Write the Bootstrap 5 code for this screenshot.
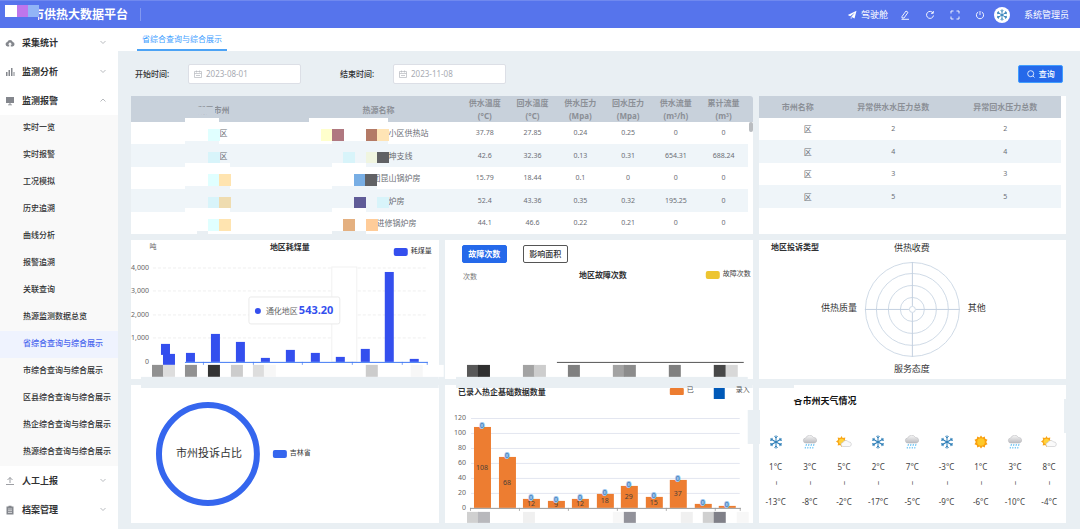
<!DOCTYPE html>
<html lang="zh-CN">
<head>
<meta charset="utf-8">
<meta name="viewport" content="width=device-width, initial-scale=1">
<title>供热大数据平台</title>
<link href="https://cdn.jsdelivr.net/npm/bootstrap@5.3.0/dist/css/bootstrap.min.css" rel="stylesheet">
<style>
:root{--page:#e9eff3;--brand:#5674ec;--primary:#2569ea}
body{font-family:"Noto Sans","Noto Sans CJK SC",sans-serif;font-size:8px;line-height:12px;color:#303133;background:var(--page)}
svg{display:block}
.topbar{height:28px;background:var(--brand);border-top:1px solid #7089ef;color:#fff;padding:0 11px 0 32px;font-size:9px}
.brand-name{font-size:12px;line-height:20px;font-weight:700}
.brand-mask{left:5px;top:4px}
.brand-rule{width:1px;height:13px;background:#8298f0;margin-left:12px}
.tools{margin-left:-4px}
.tool-btn{border:0;background:none;padding:0;color:#fff;width:10px;height:10px;margin-right:15px}
.avatar{margin:0 14px 0 -6px}
.side{width:118px;background:#fff}
.group-btn{height:29px;width:100%;border:0;background:none;padding:0 11px 0 5px;font-size:9px;font-weight:700;color:#303133}
.group-btn .label-text{margin-left:7px}
.sub-list{background:#f9f9f9}
.sub-list a{height:27px;padding:0 0 3px 23px;display:flex;align-items:center;color:#303133;text-decoration:none;font-weight:500;white-space:nowrap}
.sub-list a.active{background:#eff3fe;color:#4a66ee}
.main-col{min-width:0}
.tabs{background:#fff;height:23px;padding-left:19px}
.tabs a{color:#409eff;text-decoration:none;padding:0 5px;border-bottom:2px solid #4da3f5;line-height:22px;height:23px}
.filters{height:45px;padding:0 17px}
.filters label{font-weight:500;width:53px}
.date-box{width:113px;height:20px;border:1px solid #dcdfe6;border-radius:2px;background:#fff;padding:0 5px;margin-right:39px}
.date-box input{border:0;outline:0;background:none;padding:0;width:80px;color:#a8abb2;line-height:12px}
.search-btn{width:45px;height:18px;border-radius:2px;padding:0;font-size:8px;line-height:12px;font-weight:500;background:var(--primary);border-color:#409eff}
.board{padding:0 14px 6px 13px;display:grid;grid-template-columns:repeat(3,minmax(0,1fr));grid-auto-rows:1fr;gap:6px}
.panel{background:#fff;position:relative;min-width:0}
.panel svg text,.weather{font-family:"Noto Sans","Noto Sans CJK SC",sans-serif}
.panel-wide{grid-column:span 2;padding-right:5px;background:linear-gradient(#c8d1db 26px,#fff 26px);border-radius:3px 3px 0 0}
.panel-side{padding-right:5px}
.grid-table{width:100%;table-layout:fixed;border-collapse:collapse;text-align:center;color:#6b6e75;font-size:7px}
.grid-table th{background:#c8d1db;color:#8b8f96;font-size:8px;font-weight:700;padding:0;height:22px}
.grid-table.tall th{height:26px;line-height:13px}
.grid-table sup{font-size:5px;line-height:0}
.grid-table td{padding:0;height:22px;line-height:12px;white-space:nowrap;overflow:hidden}
.grid-table tbody tr:nth-child(even) td{height:23px;background:#eff5f9}
.grid-table td.cjk{font-size:8px}
.hid-3{padding-left:20px}.hid-5{padding-left:36px}.hid-6{padding-left:44px}.hid-8{padding-left:60px}
.overlay{position:absolute;left:0;top:0;overflow:visible;pointer-events:none}
.thumb{position:absolute;right:0;top:26px;width:4px;height:10px;border-radius:2px;background:#b9bcc0}
.chart{width:100%;height:auto;overflow:visible}
.mode-row{height:23px;padding:5px 17px 0}
.mode-btn{height:18px;width:45px;padding:0;border-radius:2px;font-size:8px;line-height:12px;font-weight:700;background:var(--primary);border-color:var(--primary)}
.mode-btn.plain{background:#fff;color:#303133;border-color:#555;font-weight:500}
.weather-title{font-size:9px;line-height:14px;font-weight:700;color:#111;padding:9px 0 0 35px;margin:0}
.weather{display:grid;grid-template-columns:repeat(9,1fr);text-align:center;padding-top:27px;color:#444}
.weather svg{width:16px;height:14px;margin:0 auto 12px}
.tilde{writing-mode:vertical-rl;height:6px;font-size:7px;line-height:8px;margin:7px auto 10px;width:8px;color:#222}
</style>
</head>
<body class="d-flex flex-column min-vh-100">
<svg width="0" height="0" class="position-absolute" aria-hidden="true">
<defs>
<linearGradient id="cl" x1="0" y1="0" x2="0" y2="1"><stop offset="0" stop-color="#f7f7f7"/><stop offset="1" stop-color="#bcbcc0"/></linearGradient>
<symbol id="snow" viewBox="0 0 16 14"><g stroke="#2f7fb8" stroke-width="1" fill="none"><g id="arm"><path d="M8 7V.4M6.400 1.300 8 2.900l1.600-1.600"/></g><use href="#arm" transform="rotate(60 8 7)"/><use href="#arm" transform="rotate(120 8 7)"/><use href="#arm" transform="rotate(180 8 7)"/><use href="#arm" transform="rotate(240 8 7)"/><use href="#arm" transform="rotate(300 8 7)"/></g></symbol>
<symbol id="rain" viewBox="0 0 16 14"><path d="M4 8a2.500 2.500 0 0 1-.3-5A4.300 4.300 0 0 1 11.500 2.500 2.800 2.800 0 0 1 12.500 8z" fill="url(#cl)" stroke="#b5b5b8" stroke-width=".5"/><path d="M4.500 9 4 10.800M7 9l-.5 1.800M9.500 9 9 10.800M12 9l-.5 1.800M3.500 12l-.4 1.500M6 12l-.4 1.500M8.500 12l-.4 1.500M11 12l-.4 1.500" stroke="#6cc4f4" stroke-width="1.100"/></symbol>
<symbol id="part" viewBox="0 0 16 14"><g transform="translate(5.500 6.500)"><path d="M0-5.500 1.200-3.600 3.800-4 3.400-1.500 5.500 0 3.400 1.500 3.800 4 1.200 3.600 0 5.500-1.200 3.600-3.800 4-3.400 1.500-5.500 0-3.400-1.500-3.800-4-1.200-3.600z" fill="#f9a516"/><circle r="2.800" fill="#ffd23c"/></g><path d="M7 11.500a2 2 0 0 1 0-4 3 3 0 0 1 5.500-.5 2.300 2.300 0 0 1 1 4.500z" fill="#fafafa" stroke="#c4c4c8" stroke-width=".6"/></symbol>
<symbol id="sunny" viewBox="0 0 16 14"><g transform="translate(8 7)"><path d="M0-6.500 1.500-4.600 3.800-5.500 4.200-3.200 6.500-2.200 5.200 0 6.500 2.200 4.200 3.200 3.800 5.500 1.500 4.600 0 6.500-1.500 4.600-3.800 5.500-4.200 3.200-6.500 2.200-5.200 0-6.500-2.200-4.200-3.200-3.800-5.500-1.500-4.600z" fill="#f9a010"/><circle r="3.800" fill="#ffc928"/></g></symbol>
<symbol id="down" viewBox="0 0 8 8"><path d="M1.500 2 4 4.500 6.500 2" fill="none" stroke="#a6a9af" stroke-width=".8"/></symbol>
<symbol id="up" viewBox="0 0 8 8"><path d="M1.500 4.500 4 2l2.500 2.500" fill="none" stroke="#a6a9af" stroke-width=".8"/></symbol>
<symbol id="cal" viewBox="0 0 8 8"><path d="M.5 1.500h7v6h-7zM.5 3.500h7M2.500.5v2M5.500.5v2M2 5.500h4" fill="none" stroke="#b4b7bd" stroke-width=".7"/></symbol>
</defs></svg>

<header class="topbar d-flex align-items-center position-relative">
  <span class="brand-name">市供热大数据平台</span>
  <svg class="brand-mask position-absolute" width="34" height="18" aria-hidden="true"><path d="M24 12h9v6h-9z" fill="#5674ec"/><path d="M0 0h12v12H0z" fill="#fff"/><path d="M12 0h11v12H12z" fill="#be76ec"/><path d="M23 0h11v12H23z" fill="#92b4f6"/></svg>
  <span class="brand-rule"></span>
  <a href="#" class="ms-auto me-3 d-flex align-items-center text-white text-decoration-none">
    <svg class="me-1" width="10" height="10" viewBox="0 0 10 10"><path d="M9.500.8.8 5l2.400 1.200L8 2.500 4.300 6.700 7.500 8.400zM3.800 7v2.200L5 7.700z" fill="#fff"/></svg>驾驶舱</a>
  <div class="tools d-flex align-items-center">
  <button class="tool-btn" aria-label="编辑"><svg width="10" height="10" viewBox="0 0 10 10" fill="none" stroke="#fff" stroke-width=".9"><path d="M2 6.500 6 1l2 1.400L4 8H2zM1.500 9.300h7.500"/></svg></button>
  <button class="tool-btn" aria-label="刷新"><svg width="10" height="10" viewBox="0 0 10 10" fill="none" stroke="#fff" stroke-width=".9"><path d="M8 3A3.500 3.500 0 1 0 8.500 5.500M8.300 1v2.300H6"/></svg></button>
  <button class="tool-btn" aria-label="全屏"><svg width="10" height="10" viewBox="0 0 10 10" fill="none" stroke="#fff" stroke-width=".9"><path d="M1 3.500V1h2.500M6.500 1H9v2.500M9 6.500V9H6.500M3.500 9H1V6.500"/></svg></button>
  <button class="tool-btn" aria-label="退出"><svg width="10" height="10" viewBox="0 0 10 10" fill="none" stroke="#fff" stroke-width=".9"><path d="M3.200 2A3.600 3.600 0 1 0 6.800 2M5 1v4"/></svg></button>
  </div>
  <svg class="avatar" width="16" height="16" viewBox="0 0 16 16"><circle cx="8" cy="8" r="8" fill="#fff"/><use href="#snow" x="1" y="2" width="14" height="12"/></svg>
  <span>系统管理员</span>
</header>

<div class="d-flex flex-grow-1">
<nav class="side flex-shrink-0">
  <button class="group-btn d-flex align-items-center"><svg width="10" height="10" viewBox="0 0 10 10"><path d="M2.500 8.500a2.300 2.300 0 0 1-.2-4.500 2.900 2.900 0 0 1 5.500 0 2.300 2.300 0 0 1-.2 4.500H5.800V6.500h1.300L5 4.300 2.900 6.500h1.300v2z" fill="#84878d"/></svg><span class="label-text me-auto">采集统计</span><svg width="8" height="8"><use href="#down"/></svg></button>
  <button class="group-btn d-flex align-items-center"><svg width="10" height="10" viewBox="0 0 10 10"><path d="M1 5h1.500v4H1zM3.500 3H5v6H3.500zM6 1h1.500v8H6zM8.500 5h1v4h-1z" fill="#84878d"/></svg><span class="label-text me-auto">监测分析</span><svg width="8" height="8"><use href="#down"/></svg></button>
  <button class="group-btn d-flex align-items-center"><svg width="10" height="10" viewBox="0 0 10 10"><path d="M1 1h8v6H1zM4.500 7h1v1.500h1.500v.7H3v-.7h1.500z" fill="#84878d"/></svg><span class="label-text me-auto">监测报警</span><svg width="8" height="8"><use href="#up"/></svg></button>
  <div class="sub-list">
    <a href="#">实时一览</a><a href="#">实时报警</a><a href="#">工况模拟</a><a href="#">历史追溯</a><a href="#">曲线分析</a><a href="#">报警追溯</a><a href="#">关联查询</a><a href="#">热源监测数据总览</a><a href="#" class="active">省综合查询与综合展示</a><a href="#">市综合查询与综合展示</a><a href="#">区县综合查询与综合展示</a><a href="#">热企综合查询与综合展示</a><a href="#">热源综合查询与综合展示</a>
  </div>
  <button class="group-btn d-flex align-items-center"><svg width="10" height="10" viewBox="0 0 10 10" fill="none" stroke="#84878d" stroke-width=".8"><path d="M1 8.500h8M5 7V1.500M2.500 4 5 1.500 7.500 4"/></svg><span class="label-text me-auto">人工上报</span><svg width="8" height="8"><use href="#down"/></svg></button>
  <button class="group-btn d-flex align-items-center"><svg width="10" height="10" viewBox="0 0 10 10"><path d="M1.500 1.500h2V.8h3v.7h2v8h-7z" fill="#84878d"/><path d="M3 4h4M3 5.700h4M3 7.500h4" stroke="#fff" stroke-width=".6"/></svg><span class="label-text me-auto">档案管理</span><svg width="8" height="8"><use href="#down"/></svg></button>
</nav>

<main class="main-col flex-grow-1 d-flex flex-column">
  <div class="tabs d-flex"><a href="#">省综合查询与综合展示</a></div>
  <form class="filters d-flex align-items-center" onsubmit="return false">
    <label for="d1">开始时间:</label>
    <div class="date-box d-flex align-items-center gap-1"><svg width="8" height="8" class="flex-shrink-0"><use href="#cal"/></svg><input id="d1" type="text" value="2023-08-01"></div>
    <label for="d2">结束时间:</label>
    <div class="date-box d-flex align-items-center gap-1"><svg width="8" height="8" class="flex-shrink-0"><use href="#cal"/></svg><input id="d2" type="text" value="2023-11-08"></div>
    <button class="btn btn-primary search-btn ms-auto d-flex align-items-center justify-content-center gap-1"><svg width="8" height="8" viewBox="0 0 8 8" fill="none" stroke="#fff" stroke-width=".8"><circle cx="3.700" cy="3.700" r="3"/><path d="m6 6 1.500 1.500"/></svg>查询</button>
  </form>

  <div class="board flex-grow-1">
    <section class="panel panel-wide">
      <table class="grid-table tall">
        <colgroup><col><col><col style="width:7.75%"><col style="width:7.75%"><col style="width:7.75%"><col style="width:7.75%"><col style="width:7.75%"><col style="width:7.75%"></colgroup>
        <thead><tr><th>所属市州</th><th>热源名称</th><th>供水温度<br>(°C)</th><th>回水温度<br>(°C)</th><th>供水压力<br>(Mpa)</th><th>回水压力<br>(Mpa)</th><th>供水流量<br>(m<sup>3</sup>/h)</th><th>累计流量<br>(m<sup>3</sup>)</th></tr></thead>
        <tbody>
        <tr><td class="cjk"><span class="hid-3">区</span></td><td class="cjk"><span class="hid-8">小区供热站</span></td><td>37.78</td><td>27.85</td><td>0.24</td><td>0.25</td><td>0</td><td>0</td></tr>
        <tr><td class="cjk"><span class="hid-3">区</span></td><td class="cjk"><span class="hid-6">坤支线</span></td><td>42.6</td><td>32.36</td><td>0.13</td><td>0.31</td><td>654.31</td><td>688.24</td></tr>
        <tr><td></td><td class="cjk"><span class="hid-5">团昆山锅炉房</span></td><td>15.79</td><td>18.44</td><td>0.1</td><td>0</td><td>0</td><td>0</td></tr>
        <tr><td></td><td class="cjk"><span class="hid-5">炉房</span></td><td>52.4</td><td>43.36</td><td>0.35</td><td>0.32</td><td>195.25</td><td>0</td></tr>
        <tr><td></td><td class="cjk"><span class="hid-5">进修锅炉房</span></td><td>44.1</td><td>46.6</td><td>0.22</td><td>0.21</td><td>0</td><td>0</td></tr>
        </tbody>
      </table>
      <span class="thumb"></span>
      <svg class="overlay" id="mask" width="616" height="138" aria-hidden="true"></svg>
    </section>

    <section class="panel panel-side">
      <table class="grid-table">
        <colgroup><col style="width:26%"><col style="width:37%"><col style="width:37%"></colgroup>
        <thead><tr><th>市州名称</th><th>异常供水水压力总数</th><th>异常回水压力总数</th></tr></thead>
        <tbody>
        <tr><td class="cjk"><span class="hid-3">区</span></td><td>2</td><td>2</td></tr>
        <tr><td class="cjk"><span class="hid-3">区</span></td><td>4</td><td>4</td></tr>
        <tr><td class="cjk"><span class="hid-3">区</span></td><td>3</td><td>3</td></tr>
        <tr><td class="cjk"><span class="hid-3">区</span></td><td>5</td><td>5</td></tr>
        </tbody>
      </table>
    </section>

    <section class="panel"><svg class="chart" id="coal" viewBox="0 0 308 138"></svg></section>
    <section class="panel">
      <div class="mode-row d-flex"><button class="btn btn-primary mode-btn me-3">故障次数</button><button class="btn btn-outline-dark mode-btn plain">影响面积</button></div>
      <svg class="chart" id="fault" viewBox="0 23 308 115"></svg>
    </section>
    <section class="panel"><svg class="chart" id="radar" viewBox="0 0 308 138"></svg></section>
    <section class="panel"><svg class="chart" id="share" viewBox="0 0 308 138"></svg></section>
    <section class="panel"><svg class="chart" id="firms" viewBox="0 0 308 138"></svg></section>
    <section class="panel">
      <h2 class="weather-title">各市州天气情况</h2>
      <div class="weather" id="weather"></div>
      <svg class="overlay" width="308" height="138" aria-hidden="true"><g fill="#e9eff3"><path d="M0 0h35v3H0zM-2 25h3v34h-3zM305 14h4v34h-4z"/></g><path d="M34 8h11v6H34z" fill="#fff"/></svg>
    </section>
  </div>
</main>
</div>

<script>
const rect=(x,y,w,h,f,e='')=>`<rect x="${x}" y="${y}" width="${w}" height="${h}" fill="${f}" ${e}/>`;
const line=(x1,y1,x2,y2,s,e='')=>`<path d="M${x1} ${y1}L${x2} ${y2}" stroke="${s}" ${e}/>`;
const label=(x,y,t,size=7,fill='#666',anchor='middle',e='')=>`<text x="${x}" y="${y}" font-size="${size}" fill="${fill}" text-anchor="${anchor}" dominant-baseline="central" ${e}>${t}</text>`;
const bold='font-weight="700"', page='#e9eff3';
const put=(id,s)=>{document.getElementById(id).innerHTML=s};
const tiles=(y,h,list)=>list.map(([x,c])=>rect(x,y,12,h,c)).join('');

// blanked-out cells of the heat-source table
put('mask',
 rect(57,11,27,7,'#c8d1db')+
 rect(54,22,34,23,'#fff')+rect(54,45,34,22,'#eff5f9')+rect(54,67,45,23,'#fff')+rect(54,90,45,22,'#eff5f9')+rect(54,112,45,23,'#fff')+
 rect(178,22,79,23,'#fff')+rect(201,45,56,22,'#eff5f9')+rect(201,67,34,23,'#fff')+rect(201,90,45,22,'#eff5f9')+rect(201,112,34,23,'#fff')+
 label(97,37,'区',8,'#6b6e75')+label(97,60,'区',8,'#6b6e75')+
 rect(66,135,11,11,page)+rect(201,135,34,11,page)+
 tiles(33,12,[[77,'#e0ffff'],[190,'#ffffcc'],[201,'#b07880'],[235,'#b47a66'],[246,'#ffe4b5']])+
 tiles(56,11,[[77,'#d8f4fa'],[212,'#d8f4fa'],[235,'#f0f5e0'],[246,'#606164']])+
 tiles(78,12,[[77,'#e0ffff'],[88,'#ffe4b0'],[223,'#78aee4'],[234,'#606164']])+
 tiles(101,11,[[77,'#d8f4fa'],[88,'#efdcb0'],[223,'#605c98'],[246,'#d8f4fa']])+
 tiles(123,12,[[77,'#e0ffff'],[88,'#ffe4b0'],[212,'#e4b080'],[235,'#ffcc99']]));
document.querySelectorAll('#mask text').forEach(t=>t.remove());

// coal consumption
let s=label(22,7,'吨')+label(159,7,'地区耗煤量',8,'#303133','middle',bold)+rect(263,8,14,8,'#344fee','rx="2"')+label(280,11,'耗煤量',7,'#333','start');
['4,000','3,000','2,000','1,000','0'].forEach((t,i)=>{const y=[28,51,75,98,122][i];s+=label(18,y,t,7,'#666','end');if(i<4)s+=line(22,y,297,y,'#e8e8e8','stroke-dasharray="3 2" stroke-width=".7"')});
s+=rect(201,27,25,95,'#fff','stroke="#f1f1f1"')+rect(30,104,9,11,'#344fee')+rect(32,114,12,11,'#344fee');
[[55,113],[80,94],[105,102],[130,118],[155,110],[180,113],[205,117],[230,109],[254,32],[279,119]].forEach(([x,y])=>s+=rect(x,y,9,122-y,'#344fee'));
s+=line(54,122.5,297,122.5,'#3f78f4');[72,122,171,221,271,296].forEach(x=>s+=line(x+.5,122,x+.5,125,'#3f78f4','stroke-width=".7"'));
s+=tiles(125,12,[[21,'#919191'],[32,'#ddd'],[54,'#919191'],[77,'#333'],[100,'#ccc'],[122,'#ddd'],[133,'#f7f7f7'],[235,'#ccc'],[280,'#f7f7f7']])+rect(307,125,6,12,'#fff')+rect(10,137,298,3,page);
s+=rect(118,57,91,27,'#fff','rx="2" stroke="#eaeaea"')+'<circle cx="127" cy="71" r="3" fill="#344fee"/>'+label(135,71,'通化地区',8,'#666','start')+label(168,70,'543.20',11,'#344fee','start',bold);
put('coal',s);

// fault count
put('fault',label(18,37,'次数',7,'#777','start')+label(158,35,'地区故障次数',8,'#303133','middle',bold)+rect(261,31,14,8,'#edc531','rx="2"')+label(278,34,'故障次数',7,'#444','start')+line(112,122.5,299,122.5,'#555')+
 tiles(125,12,[[22,'#585858'],[33,'#2f2f2f'],[78,'#a3a3a3'],[89,'#cdcdcd'],[123,'#808080'],[168,'#a3a3a3'],[179,'#8c8c8c'],[224,'#808080'],[269,'#484848'],[281,'#d8d8d8']])+rect(11,137,292,3,page));

// complaint radar
s=label(12,7,'地区投诉类型',8,'#303133','start',bold);
[47,36,24,12,3].forEach(r=>s+=`<circle cx="153.500" cy="69.500" r="${r}" fill="none" stroke="#c3d0e0" stroke-width=".8"/>`);
s+=line(106,69.5,150,69.5,'#c3d0e0')+line(157,69.5,201,69.5,'#c3d0e0')+line(153.5,22,153.5,66,'#c3d0e0')+line(153.5,73,153.5,117,'#c3d0e0');
s+=label(153,8,'供热收费',9,'#333')+label(80,68,'供热质量',9,'#333')+label(218,68,'其他',9,'#333')+label(153,129,'服务态度',9,'#333');
put('radar',s);

// complaint share
put('share',rect(10,-1,298,4,page)+'<circle cx="77" cy="69" r="49" fill="none" stroke="#3566ee" stroke-width="6"/>'+label(78,68,'市州投诉占比',11,'#333')+rect(142,65,14,8,'#3566ee','rx="2"')+label(159,68,'吉林省',7,'#333','start'));

// registered enterprises
s=rect(11,-1,297,4,page)+rect(303,25,6,34,page)+label(13,7,'已录入热企基础数据数量',8,'#303133','start',bold)+rect(225,3,14,7,'#ed7d31','rx="1"')+label(242,5,'已',7,'#555','start')+rect(269,3,11,11,'#0059b8')+label(291,5,'录入',7,'#555','start');
for(let i=0;i<7;i++){const y=123-15*i;s+=label(21,y,20*i,7,'#666','end');if(i)s+=line(26,y+.5,295,y+.5,'#e3e6f0')}
const v=[108,68,12,9,12,18,29,15,37,5,3], left=i=>29+Math.round(24.5*i);
v.forEach((n,i)=>{const h=Math.round(n*.75);s+=rect(left(i),123-h,17,h,'#ed7d31');if(n>8)s+=label(left(i)+8,Math.round(123-h/2),n,7,'#4a4038')});
s+=line(25,123.5,296,123.5,'#999');[25,74,123,172,221,270,295].forEach(x=>s+=line(x+.5,123,x+.5,126,'#999','stroke-width=".8"'));
v.forEach((n,i)=>{s+=label(left(i)+8,122-Math.round(n*.75),'0',7,'#3470b0','middle','stroke="#9cc6ee" stroke-width="2" paint-order="stroke"')});
s+=tiles(127,11,[[22,'#d0d0d0'],[33,'#b8b8bc'],[78,'#f0f0f0'],[168,'#f7f7f7'],[179,'#92929a'],[236,'#f0f0f0'],[258,'#d0d0d0'],[269,'#808088'],[292,'#f7f7f7']]);
put('firms',s);

put('weather',[['snow',1,-13],['rain',3,-8],['part',5,-2],['snow',2,-17],['rain',7,-5],['snow',-3,-9],['sunny',1,-6],['rain',3,-10],['part',8,-4]]
 .map(([k,a,b])=>`<div><svg aria-hidden="true"><use href="#${k}"/></svg><div>${a}°C</div><div class="tilde">~</div><div>${b}°C</div></div>`).join(''));
</script>
<script src="https://cdn.jsdelivr.net/npm/bootstrap@5.3.0/dist/js/bootstrap.bundle.min.js"></script>
</body>
</html>
